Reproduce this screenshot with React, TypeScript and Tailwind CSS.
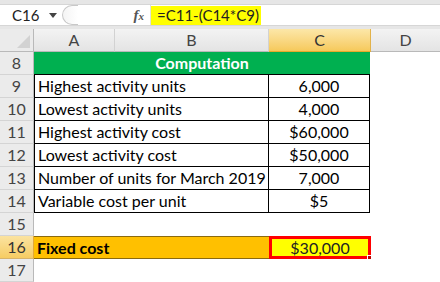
import React from 'react';

const rows: { n: number; label: string; value: string }[] = [
  { n: 9, label: 'Highest activity units', value: '6,000' },
  { n: 10, label: 'Lowest activity units', value: '4,000' },
  { n: 11, label: 'Highest activity cost', value: '$60,000' },
  { n: 12, label: 'Lowest activity cost', value: '$50,000' },
  { n: 13, label: 'Number of units for March 2019', value: '7,000' },
  { n: 14, label: 'Variable cost per unit', value: '$5' },
];

const RowHeader = ({ n, active = false }: { n: number; active?: boolean }) => (
  <div
    className={`w-[34px] shrink-0 h-full flex items-center justify-center border-r border-b text-[16px] ${
      active
        ? 'bg-gradient-to-b from-[#fbe3a0] to-[#f6cc62] border-r-[#e2a93a] border-b-[#d8b46a] text-[#333]'
        : 'bg-[#ebebeb] border-r-[#b9b9b9] border-b-[#d4d4d4] text-[#444]'
    }`}
  >
    {n}
  </div>
);

export default function App() {
  return (
    <div className="w-[440px] h-[282px] overflow-hidden bg-white font-['Lato',sans-serif] text-black">
      {/* Formula bar */}
      <div className="h-[29px] bg-[#e6e6e6] pt-[4px] pb-[3px]">
        <div className="h-[22px] flex items-stretch bg-white border-y border-[#d6d6d6]">
          <div className="w-[62px] shrink-0 flex items-center justify-between pl-[12px] pr-[5px] text-[15px] text-[#222]">
            <span>C16</span>
            <svg width="8" height="5" viewBox="0 0 8 5">
              <path d="M0 0 L8 0 L4 5 Z" fill="#444" />
            </svg>
          </div>
          <div className="w-[18px] shrink-0 flex items-center">
            <div className="w-[16px] h-[20px] rounded-l-full border-l border-y border-[#c8c8c8] bg-gradient-to-r from-[#f4f4f4] to-white" />
          </div>
          <div className="w-[70px] shrink-0 flex items-center justify-end pr-[6px]">
            <span className="font-['Liberation_Serif',serif] italic font-bold text-[15px] text-[#555] leading-none">
              f<span className="text-[11px]">x</span>
            </span>
          </div>
          <div className="flex-1 flex items-center border-l border-[#e0e0e0]">
            <div className="h-[19px] bg-[#ffff00] flex items-center pl-[6px] pr-[2px] text-[15px] text-[#222] whitespace-nowrap">
              =C11-(C14*C9)
            </div>
          </div>
        </div>
      </div>

      {/* Column headers */}
      <div className="h-[23px] flex text-[16px] text-[#444]">
        <div className="w-[34px] shrink-0 bg-[#ebebeb] border-r border-b border-[#b9b9b9] flex items-end justify-end p-[3px]">
          <svg width="13" height="13" viewBox="0 0 13 13">
            <path d="M13 0 L13 13 L0 13 Z" fill="#d2d2d2" />
          </svg>
        </div>
        <div className="w-[81px] shrink-0 bg-gradient-to-b from-[#f3f3f3] to-[#e4e4e4] border-r border-b border-r-[#d2d2d2] border-b-[#b9b9b9] flex items-center justify-center">A</div>
        <div className="w-[154px] shrink-0 bg-gradient-to-b from-[#f3f3f3] to-[#e4e4e4] border-r border-b border-r-[#d2d2d2] border-b-[#b9b9b9] flex items-center justify-center">B</div>
        <div className="w-[102px] shrink-0 bg-gradient-to-b from-[#fce7a8] to-[#f6c95a] border-r border-b border-r-[#e2b24a] border-b-[#e8a92c] flex items-center justify-center text-[#333]">C</div>
        <div className="flex-1 bg-gradient-to-b from-[#f3f3f3] to-[#e4e4e4] border-b border-[#b9b9b9] flex items-center justify-center">D</div>
      </div>

      {/* Row 8 */}
      <div className="h-[23px] flex">
        <RowHeader n={8} />
        <div className="w-[336px] shrink-0 bg-[#00b050] border-b border-black flex items-center justify-center text-white font-bold text-[16px]">
          Computation
        </div>
      </div>

      {rows.map((r) => (
        <div key={r.n} className="h-[23px] flex">
          <RowHeader n={r.n} />
          <div className="w-[235px] shrink-0 border-l border-b border-r border-black flex items-center pl-[3px] text-[16px] whitespace-nowrap">
            {r.label}
          </div>
          <div className="w-[101px] shrink-0 border-b border-r border-black flex items-center justify-center text-[16px]">
            {r.value}
          </div>
        </div>
      ))}

      {/* Row 15 */}
      <div className="h-[23px] flex">
        <RowHeader n={15} />
      </div>

      {/* Row 16 */}
      <div className="h-[23px] flex">
        <RowHeader n={16} active />
        <div className="w-[235px] shrink-0 bg-[#ffc000] border-y border-[#8a6a10] flex items-center pl-[3px] text-[16px] font-bold">
          Fixed cost
        </div>
        <div className="relative w-[102px] shrink-0 bg-[#ffff00] border-[3px] border-[#ff0000] flex items-center justify-center text-[16px] text-[#222]">
          $30,000
          <div className="absolute -right-[4px] -bottom-[4px] w-[5px] h-[5px] bg-[#c00000] border border-white" />
        </div>
      </div>

      {/* Row 17 */}
      <div className="h-[23px] flex">
        <RowHeader n={17} />
      </div>
    </div>
  );
}
